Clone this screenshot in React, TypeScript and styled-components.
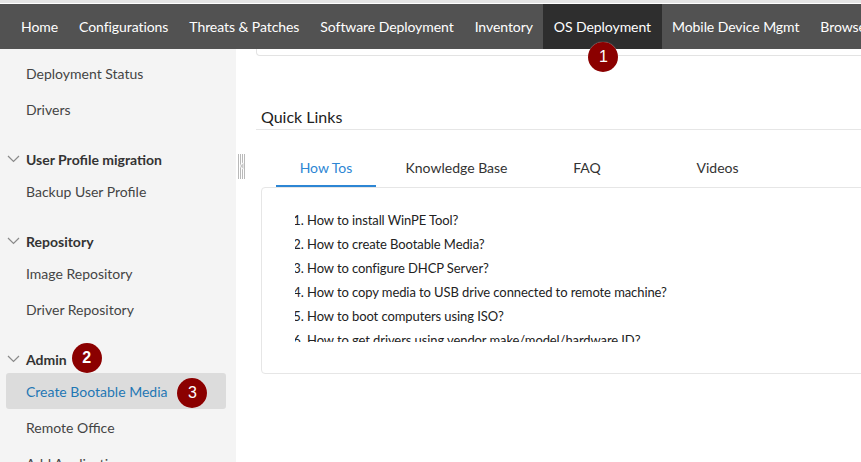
import React from 'react';
import styled, { createGlobalStyle } from 'styled-components';

const GlobalStyle = createGlobalStyle`
  html, body {
    margin: 0;
    height: 100%;
    overflow: hidden;
    background: #fff;
  }
  body {
    font-family: Lato, "Open Sans", sans-serif;
  }
`;

const navItems = [
    'Home',
    'Configurations',
    'Threats & Patches',
    'Software Deployment',
    'Inventory',
    'OS Deployment',
    'Mobile Device Mgmt',
    'Browsers',
];

const howTos = [
    'How to install WinPE Tool?',
    'How to create Bootable Media?',
    'How to configure DHCP Server?',
    'How to copy media to USB drive connected to remote machine?',
    'How to boot computers using ISO?',
    'How to get drivers using vendor make/model/hardware ID?',
];

const tabs = ['How Tos', 'Knowledge Base', 'FAQ', 'Videos'];

const Chevron = () => (
    <ChevronIcon viewBox="0 0 13 8" aria-hidden="true">
        <path d="M1 1l5.5 5.5L12 1" fill="none" stroke="#8a8a8a" strokeWidth="1.2" />
    </ChevronIcon>
);

const App: React.FC = () => {
    return (
        <Page>
            <GlobalStyle />
            <NavBar>
                {navItems.map((item) => (
                    <NavItem key={item} $active={item === 'OS Deployment'}>
                        {item}
                        {item === 'OS Deployment' && <NavBadge>1</NavBadge>}
                    </NavItem>
                ))}
            </NavBar>
            <Body>
                <Sidebar>
                    <SideItem>Deployment Status</SideItem>
                    <SideItem>Drivers</SideItem>
                    <SideGroup>
                        <Chevron />
                        User Profile migration
                    </SideGroup>
                    <SideItem>Backup User Profile</SideItem>
                    <SideGroup>
                        <Chevron />
                        Repository
                    </SideGroup>
                    <SideItem>Image Repository</SideItem>
                    <SideItem>Driver Repository</SideItem>
                    <SideGroup>
                        <Chevron />
                        Admin
                        <InlineBadge>2</InlineBadge>
                    </SideGroup>
                    <SideItem $active>
                        Create Bootable Media
                        <InlineBadge>3</InlineBadge>
                    </SideItem>
                    <SideItem>Remote Office</SideItem>
                    <SideItem>Add Application</SideItem>
                </Sidebar>
                <Splitter>
                    <svg width="7" height="25" viewBox="0 0 7 25" aria-hidden="true">
                        <path d="M0.5 0v25M2.5 0v25M4.5 0v25M6.5 0v25" stroke="#b9b9b9" strokeWidth="1" />
                        <path d="M5.5 8v8L1 12z" fill="#fff" />
                        <path d="M5.5 9v6L2 12z" fill="#c9c9c9" />
                    </svg>
                </Splitter>
                <Main>
                    <TopCard />
                    <SectionTitle>Quick Links</SectionTitle>
                    <TabBar>
                        {tabs.map((tab) => (
                            <Tab key={tab} $active={tab === 'How Tos'}>
                                {tab}
                            </Tab>
                        ))}
                    </TabBar>
                    <LinksCard>
                        <LinksScroll>
                            <LinksList>
                                {howTos.map((link) => (
                                    <li key={link}>{link}</li>
                                ))}
                            </LinksList>
                        </LinksScroll>
                    </LinksCard>
                </Main>
            </Body>
        </Page>
    );
};

export default App;

const Page = styled.div`
  width: 861px;
  height: 462px;
  display: flex;
  flex-direction: column;
  overflow: hidden;
  border-top: 3px solid #e4e4e4;
  box-sizing: border-box;
  padding-top: 1px;
`;

const NavBar = styled.nav`
  flex: none;
  height: 45px;
  display: flex;
  padding-left: 10.5px;
  background: #525252;
  position: relative;
  z-index: 1;
  white-space: nowrap;
`;

const NavItem = styled.div<{ $active?: boolean }>`
  position: relative;
  display: flex;
  align-items: center;
  padding: 0 10.5px;
  font-size: 14px;
  letter-spacing: -0.07px;
  color: #fff;
  background: ${(p) => (p.$active ? '#2e2e2e' : 'transparent')};
`;

const Badge = styled.span`
  width: 30px;
  height: 30px;
  border-radius: 50%;
  background: #8b0000;
  color: #fff;
  font-family: "Liberation Sans", Arial, sans-serif;
  font-size: 16px;
  letter-spacing: 0;
  display: flex;
  align-items: center;
  justify-content: center;
  box-shadow: 0 0 1px rgba(255, 255, 255, 0.8);
`;

const NavBadge = styled(Badge)`
  position: absolute;
  left: 45px;
  top: 38px;
`;

const InlineBadge = styled(Badge)`
  margin-left: 5px;
  margin-top: -3px;
`;

const Body = styled.div`
  flex: 1;
  min-height: 0;
  display: flex;
`;

const Sidebar = styled.aside`
  flex: none;
  width: 236px;
  box-sizing: border-box;
  padding: 6px 10px 0 6px;
  background: #f4f4f4;
  overflow: hidden;
`;

const SideItem = styled.div<{ $active?: boolean }>`
  height: 36px;
  display: flex;
  align-items: center;
  padding-left: 20px;
  border-radius: 3px;
  font-size: 14px;
  white-space: nowrap;
  color: ${(p) => (p.$active ? '#1f77b4' : '#444')};
  background: ${(p) => (p.$active ? '#dcdcdc' : 'transparent')};

  & > ${InlineBadge} {
    margin-left: 10px;
    margin-top: 3px;
  }
`;

const SideGroup = styled.div`
  height: 28px;
  margin-top: 18px;
  display: flex;
  align-items: center;
  font-size: 14px;
  font-weight: 700;
  color: #333;
  white-space: nowrap;
`;

const ChevronIcon = styled.svg`
  width: 13px;
  height: 8px;
  margin: 0 6px 0 1px;
`;

const Splitter = styled.div`
  flex: none;
  width: 20px;
  padding-top: 105px;
  box-sizing: border-box;

  svg {
    display: block;
    margin-left: 2px;
  }
`;

const Main = styled.main`
  flex: 1;
  min-width: 0;
  display: flex;
  flex-direction: column;
  overflow: hidden;
`;

const TopCard = styled.div`
  flex: none;
  height: 7px;
  width: 640px;
  box-sizing: border-box;
  border: 1px solid #e3e3e3;
  border-top: none;
  border-radius: 0 0 4px 4px;
`;

const SectionTitle = styled.h2`
  flex: none;
  width: 640px;
  box-sizing: border-box;
  margin: 49px 0 0;
  height: 25px;
  padding-left: 5px;
  font-size: 16px;
  font-weight: 400;
  line-height: 24px;
  color: #222;
  border-bottom: 1px solid #e6e6e6;
`;

const TabBar = styled.div`
  flex: none;
  display: flex;
  gap: 30.5px;
  margin: 20px 0 0 20px;
`;

const Tab = styled.div<{ $active?: boolean }>`
  width: 100px;
  height: 37px;
  box-sizing: border-box;
  display: flex;
  align-items: center;
  justify-content: center;
  white-space: nowrap;
  font-size: 14px;
  color: ${(p) => (p.$active ? '#2d86d4' : '#333')};
  border-bottom: 2px solid ${(p) => (p.$active ? '#2d86d4' : 'transparent')};
`;

const LinksCard = styled.section`
  flex: none;
  width: 640px;
  height: 187px;
  margin-left: 5px;
  box-sizing: border-box;
  padding: 20px 0 0 33px;
  border: 1px solid #e6e6e6;
  border-radius: 4px;
`;

const LinksScroll = styled.div`
  height: 134px;
  overflow: hidden;
`;

const LinksList = styled.ol`
  margin: 0;
  padding: 0 0 0 12px;
  font-size: 13px;
  letter-spacing: -0.09px;
  line-height: 24px;
  color: #222;
`;
